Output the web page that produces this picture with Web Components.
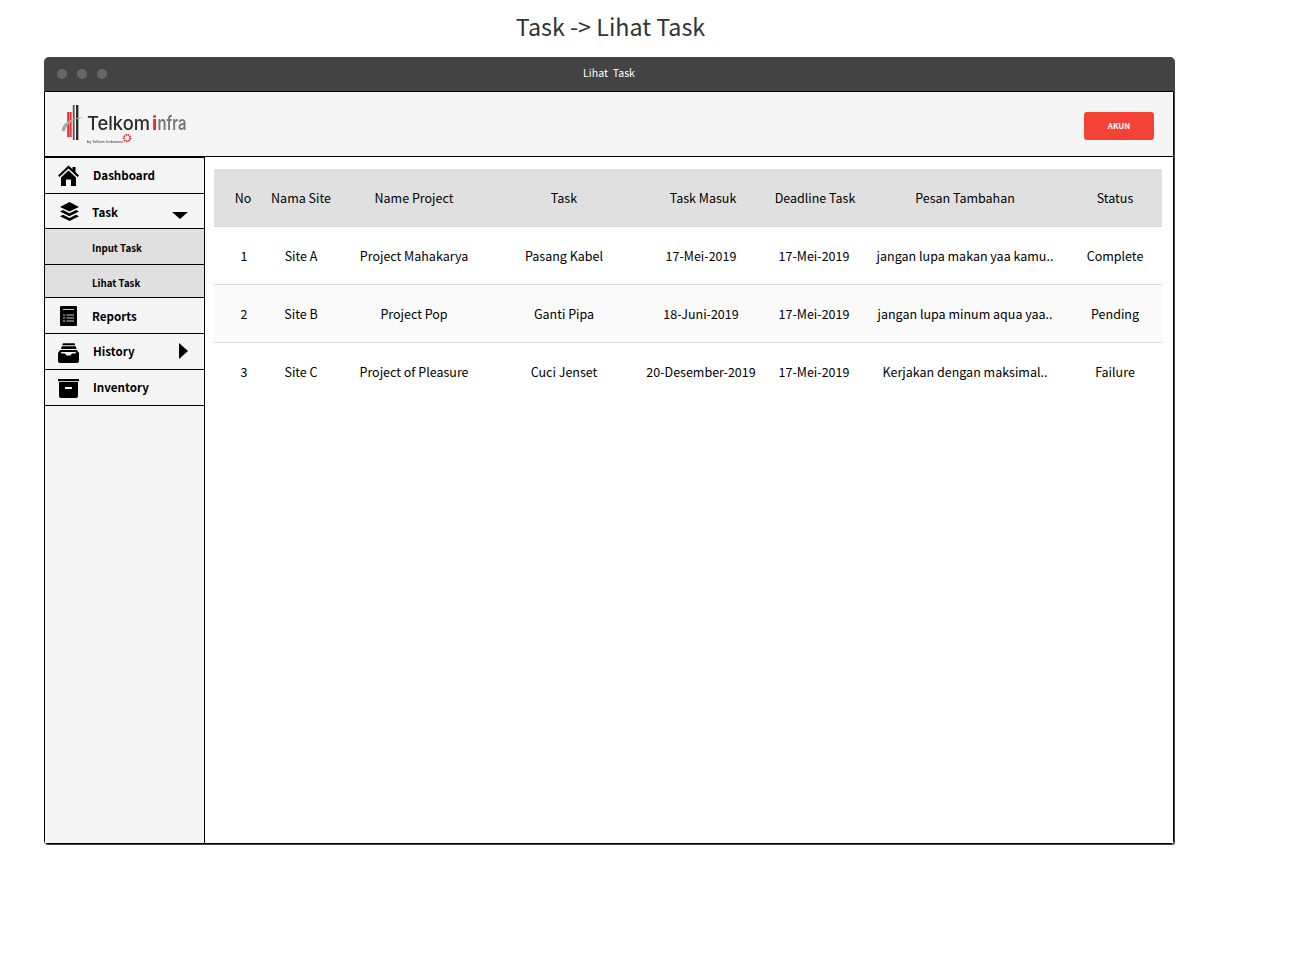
<!DOCTYPE html>
<html>
<head>
<meta charset="utf-8">
<title>Task -> Lihat Task</title>
<style>
	html, body { margin: 0; background: #fff; }
	body { font-family: "Noto Sans CJK JP", "Source Sans Pro", "Noto Sans", sans-serif; color: #000; }
</style>
</head>
<body>

<app-page heading="Task -> Lihat Task">
	<app-window label="Lihat  Task">
		<app-header slot="header"></app-header>
		<side-nav slot="side">
			<nav-item icon="home" label="Dashboard" style="--h:36px;--tx:48px;--dy:-1px"></nav-item>
			<nav-item icon="layers" label="Task" caret="down" style="--h:35px;--tx:47px;--dy:1px"></nav-item>
			<nav-item label="Input Task" sub style="--h:36px;--tx:47px"></nav-item>
			<nav-item label="Lihat Task" sub style="--h:33px;--tx:47px;--dy:1px"></nav-item>
			<nav-item icon="report" label="Reports" style="--h:36px;--tx:47px"></nav-item>
			<nav-item icon="tray" label="History" caret="right" style="--h:36px;--tx:48px;--dy:-1px"></nav-item>
			<nav-item icon="archive" label="Inventory" style="--h:36px;--tx:48px;--dy:-1px"></nav-item>
		</side-nav>
		<task-table></task-table>
	</app-window>
</app-page>

<script>
class AppPage extends HTMLElement {
	constructor() {
		super();
		this.attachShadow({ mode: "open" });
	}

	connectedCallback() {
		this.shadowRoot.innerHTML = `
			<style>
				:host { display: block; width: 1306px; height: 966px; overflow: hidden; }
				h1 {
					margin: 0;
					width: 1221px;
					height: 57px;
					padding-top: 7px;
					box-sizing: border-box;
					text-align: center;
					font-size: 23.3px;
					line-height: 38px;
					font-weight: 400;
					color: #333;
				}
				.wrap { padding-left: 44px; }
			</style>
			<h1>${this.getAttribute("heading").replace(">", "&gt;")}</h1>
			<div class="wrap"><slot></slot></div>
		`;
	}
}

class AppWindow extends HTMLElement {
	constructor() {
		super();
		this.attachShadow({ mode: "open" });
	}

	connectedCallback() {
		this.shadowRoot.innerHTML = `
			<style>
				:host {
					display: flex;
					flex-direction: column;
					width: 1130px;
					height: 787px;
					background: #fff;
					border-radius: 5px 5px 3px 3px;
					box-shadow: 1px 1px 0 #434343;
				}
				.bar {
					flex: none;
					height: 34px;
					background: #434343;
					border-radius: 5px 5px 0 0;
					box-shadow: 1px 0 0 #434343;
					display: flex;
					align-items: center;
					position: relative;
					padding-left: 13px;
					gap: 10px;
				}
				.dot { width: 10px; height: 10px; border-radius: 50%; background: #666; }
				.label {
					position: absolute;
					left: 0;
					right: 0;
					top: 7px;
					text-align: center;
					font-size: 10.6px;
					line-height: 18px;
					color: #fff;
					white-space: pre;
				}
				.body {
					flex: 1;
					min-height: 0;
					display: flex;
					flex-direction: column;
					border: 1px solid #000;
					border-radius: 0 0 3px 3px;
				}
				.main { flex: 1; min-height: 0; display: flex; }
			</style>
			<div class="bar">
				<span class="dot"></span><span class="dot"></span><span class="dot"></span>
				<span class="label">${this.getAttribute("label")}</span>
			</div>
			<div class="body">
				<slot name="header"></slot>
				<div class="main">
					<slot name="side"></slot>
					<slot></slot>
				</div>
			</div>
		`;
	}
}

class AppHeader extends HTMLElement {
	constructor() {
		super();
		this.attachShadow({ mode: "open" });
	}

	connectedCallback() {
		this.shadowRoot.innerHTML = `
			<style>
				:host {
					display: flex;
					flex: none;
					align-items: center;
					justify-content: space-between;
					height: 64px;
					background: #f5f5f5;
					border-bottom: 1px solid #000;
					padding: 0 19px 0 15px;
				}
				svg { display: block; overflow: visible; filter: blur(.4px); }
				.logo-main { font-family: "Inter", sans-serif; font-size: 19px; }
				.logo-sub { font-family: "Liberation Sans", sans-serif; font-size: 4px; fill: #333; }
				button {
					width: 70px;
					height: 28px;
					border: 0;
					border-radius: 3px;
					background: #f44336;
					color: #fff;
					font: 700 8px/28px "Noto Sans CJK JP", sans-serif;
					padding: 0;
					margin-top: 4px;
				}
			</style>
			<svg width="128" height="44" viewBox="0 0 128 44">
				<rect x="7.2" y="10" width="2" height="25" fill="#e8282d"/>
				<rect x="9.6" y="10" width="2" height="25" fill="#e8282d"/>
				<rect x="12.8" y="3" width="1.8" height="35" fill="#555"/>
				<rect x="16" y="3" width="2.4" height="35" fill="#2b2b2b"/>
				<path d="M2 29C1 22 11 15 24 15.5C15 17 6 21 5 29Z" fill="#a8a8a8"/>
				<text class="logo-main" x="27" y="28" fill="#2b2b2b" font-weight="500" textLength="63" lengthAdjust="spacingAndGlyphs">Telkom</text>
				<text class="logo-main" x="92" y="28" fill="#e8282d" font-weight="700">i</text>
				<text class="logo-main" x="97.5" y="28" fill="#777" font-weight="600" textLength="29" lengthAdjust="spacingAndGlyphs">nfra</text>
				<text class="logo-sub" x="27" y="41">by Telkom Indonesia</text>
				<circle cx="67" cy="36" r="3.2" fill="none" stroke="#e8282d" stroke-width="2" stroke-dasharray="1.4 .8"/>
			</svg>
			<button>AKUN</button>
		`;
	}
}

class SideNav extends HTMLElement {
	constructor() {
		super();
		this.attachShadow({ mode: "open" });
	}

	connectedCallback() {
		this.shadowRoot.innerHTML = `
			<style>
				:host {
					display: flex;
					flex-direction: column;
					flex: none;
					width: 159px;
					background: #f5f5f5;
					border-top: 1px solid #000;
					border-right: 1px solid #000;
				}
			</style>
			<slot></slot>
		`;
	}
}

const NAV_ICONS = {
	home: `<path d="M-1 10.5 L9.5 0.5 L13.5 4.2 V2 H16.5 V7 L20 10.5 L18.6 12 L9.5 3.4 L0.4 12 Z"/><path d="M9.5 5.5 L17 12.5 V21 H12 V14.5 H7 V21 H2 V12.5 Z"/>`,
	layers: `<g transform="translate(1 0)"><path d="M9.5 2 L19 7 L9.5 11.6 L0 7 Z"/><path d="M3 10 L9.5 13.2 L16 10 L19 11.5 L9.5 16.2 L0 11.5 Z"/><path d="M3 14.8 L9.5 18 L16 14.8 L19 16.3 L9.5 21 L0 16.3 Z"/></g>`,
	report: `<rect x="1" y="1" width="17" height="20" rx="1"/><g fill="#ccc"><rect x="4" y="4" width="11" height="1"/><rect x="4" y="9.5" width="2.2" height="1"/><rect x="7.5" y="9.5" width="7.5" height="1"/><rect x="4" y="12.5" width="2.2" height="1"/><rect x="7.5" y="12.5" width="7.5" height="1"/><rect x="4" y="15.5" width="2.2" height="1"/><rect x="7.5" y="15.5" width="7.5" height="1"/></g>`,
	tray: `<path d="M4 2.2 H15.5 L16.3 4.2 H3.2 Z"/><path d="M2.8 5.3 H16.7 L17.5 8 H2 Z"/><path fill-rule="evenodd" d="M1.2 9 H17.8 L20 12 V20 Q20 22 18 22 H1 Q-1 22 -1 20 V12 Z M2.2 11 V12.4 H6 L7.6 14.6 H11.4 L13 12.4 H16.8 V11 Z"/>`,
	archive: `<path d="M-1 2 H20 V4.2 H-1 Z"/><path fill-rule="evenodd" d="M0 5 H19 V19 Q19 21 17 21 H2 Q0 21 0 19 Z M6 10 V12 H13 V10 Z"/>`,
};

class NavItem extends HTMLElement {
	constructor() {
		super();
		this.attachShadow({ mode: "open" });
	}

	connectedCallback() {
		const sub = this.hasAttribute("sub");
		const icon = NAV_ICONS[this.getAttribute("icon")];
		const caret = this.getAttribute("caret");
		this.shadowRoot.innerHTML = `
			<style>
				:host {
					display: block;
					flex: none;
					position: relative;
					box-sizing: border-box;
					height: var(--h, 36px);
					border-bottom: 1px solid #000;
					background: ${sub ? "#e0e0e0" : "#f5f5f5"};
				}
				.row { display: flex; align-items: center; height: 100%; }
				svg.icon { position: absolute; left: 14px; top: 50%; margin-top: -11px; width: 20px; height: 21px; overflow: visible; }
				.text {
					margin-left: var(--tx, 48px);
					position: relative;
					top: var(--dy, 0px);
					font-size: ${sub ? "9.7px" : "11.6px"};
					font-weight: 700;
					line-height: 18px;
					${sub ? "margin-top: 2px;" : ""}
				}
				.caret { position: absolute; }
				.down {
					right: 16px;
					top: 18px;
					border: solid transparent;
					border-width: 7px 8px 0;
					border-top-color: #000;
				}
				.right {
					left: 134px;
					top: 9px;
					border: solid transparent;
					border-width: 8px 0 8px 9px;
					border-left-color: #000;
				}
			</style>
			<div class="row">
				${icon ? `<svg class="icon" viewBox="0 0 20 21">${icon}</svg>` : ""}
				<span class="text">${this.getAttribute("label")}</span>
				${caret ? `<span class="caret ${caret}"></span>` : ""}
			</div>
		`;
	}
}

const TASK_COLUMNS = [
	{ name: "No", head: 7, cell: 8 },
	{ name: "Nama Site" },
	{ name: "Name Project" },
	{ name: "Task" },
	{ name: "Task Masuk", cell: -2 },
	{ name: "Deadline Task", cell: -1 },
	{ name: "Pesan Tambahan", head: -3, cell: -3 },
	{ name: "Status" },
];

const TASK_ROWS = [
	["1", "Site A", "Project Mahakarya", "Pasang Kabel", "17-Mei-2019", "17-Mei-2019", "jangan lupa makan yaa kamu..", "Complete"],
	["2", "Site B", "Project Pop", "Ganti Pipa", "18-Juni-2019", "17-Mei-2019", "jangan lupa minum aqua yaa..", "Pending"],
	["3", "Site C", "Project of Pleasure", "Cuci Jenset", "20-Desember-2019", "17-Mei-2019", "Kerjakan dengan maksimal..", "Failure"],
];

class TaskTable extends HTMLElement {
	constructor() {
		super();
		this.attachShadow({ mode: "open" });
	}

	renderCell(text, shift) {
		return `<div class="cell"><span style="position:relative;left:${shift || 0}px">${text}</span></div>`;
	}

	connectedCallback() {
		const head = TASK_COLUMNS.map((c) => this.renderCell(c.name, c.head)).join("");
		const rows = TASK_ROWS.map((r) => {
			const cells = r.map((t, i) => this.renderCell(t, TASK_COLUMNS[i].cell)).join("");
			return `<div class="row">${cells}</div>`;
		}).join("");
		this.shadowRoot.innerHTML = `
			<style>
				:host {
					display: block;
					flex: 1;
					min-width: 0;
					background: #fff;
					padding: 12px 11px 0 9px;
					font-size: 12.5px;
				}
				.row, .head {
					display: grid;
					grid-template-columns: 44px 86px 140px 160px 118px 106px 200px 94px;
					box-sizing: border-box;
					height: 58px;
					border-bottom: 1px solid #dedede;
				}
				.head { background: #e0e0e0; border-bottom-color: #d6d6d6; }
				.row:nth-child(even) { background: #fafafa; }
				.row:last-child { border-bottom-color: transparent; }
				.cell {
					display: flex;
					align-items: center;
					justify-content: center;
					white-space: nowrap;
					line-height: 20px;
				}
			</style>
			<div class="head">${head}</div>
			<div class="rows">${rows}</div>
		`;
	}
}

customElements.define("app-page", AppPage);
customElements.define("app-window", AppWindow);
customElements.define("app-header", AppHeader);
customElements.define("side-nav", SideNav);
customElements.define("nav-item", NavItem);
customElements.define("task-table", TaskTable);
</script>
</body>
</html>
